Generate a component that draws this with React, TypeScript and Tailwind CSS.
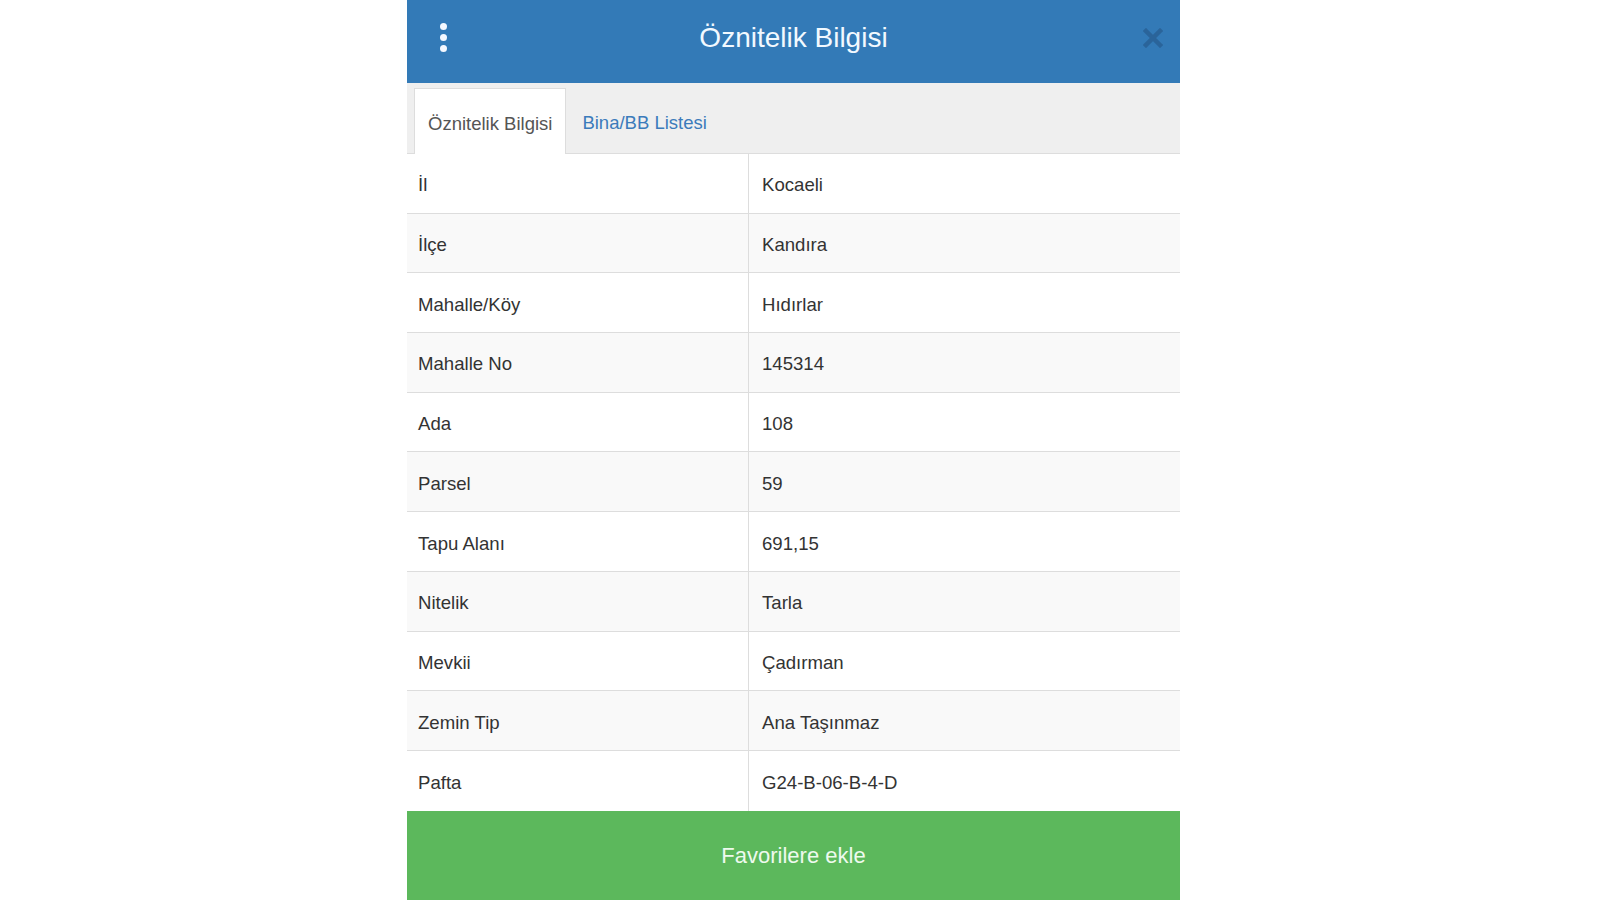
import React from 'react';

const rows: { label: string; value: string }[] = [
  { label: 'İl', value: 'Kocaeli' },
  { label: 'İlçe', value: 'Kandıra' },
  { label: 'Mahalle/Köy', value: 'Hıdırlar' },
  { label: 'Mahalle No', value: '145314' },
  { label: 'Ada', value: '108' },
  { label: 'Parsel', value: '59' },
  { label: 'Tapu Alanı', value: '691,15' },
  { label: 'Nitelik', value: 'Tarla' },
  { label: 'Mevkii', value: 'Çadırman' },
  { label: 'Zemin Tip', value: 'Ana Taşınmaz' },
  { label: 'Pafta', value: 'G24-B-06-B-4-D' },
];

function MenuDots() {
  return (
    <div className="flex flex-col gap-[4px]">
      <span className="block w-[7px] h-[7px] rounded-full bg-[#f4f8ff]" />
      <span className="block w-[7px] h-[7px] rounded-full bg-[#f4f8ff]" />
      <span className="block w-[7px] h-[7px] rounded-full bg-[#f4f8ff]" />
    </div>
  );
}

function CloseIcon() {
  return (
    <svg width="20" height="20" viewBox="0 0 20 20">
      <path d="M3 3 L17 17 M17 3 L3 17" stroke="#2a649a" strokeWidth="4.5" strokeLinecap="square" />
    </svg>
  );
}

export default function App() {
  return (
    <div className="min-h-[900px] bg-white" style={{ fontFamily: '"Liberation Sans", Arial, sans-serif' }}>
      <div className="ml-[407px] w-[773px] flex flex-col">
        {/* header */}
        <div className="h-[83px] bg-[#337ab7] grid grid-cols-[80px_1fr_80px] items-center">
          <div className="pl-[33px] pb-[8px]">
            <MenuDots />
          </div>
          <div className="text-center text-[28px] text-[#f2f9ff] pb-[8px]">Öznitelik Bilgisi</div>
          <div className="flex justify-end pr-[17px] pb-[8px]">
            <CloseIcon />
          </div>
        </div>

        {/* tabs */}
        <div className="h-[71px] bg-[#efefef] border-b border-[#dddddd] pt-[5px] pl-[7px] flex items-stretch">
          <div className="bg-white border border-[#dddddd] border-b-0 -mb-px px-[13px] pt-[4px] flex items-center text-[18.5px] text-[#555555]">
            Öznitelik Bilgisi
          </div>
          <div className="px-[16px] pt-[4px] flex items-center text-[18.5px] text-[#3b7bbb]">Bina/BB Listesi</div>
        </div>

        {/* attribute table */}
        <div className="flex flex-col">
          {rows.map((row, i) => (
            <div
              key={row.label}
              className={
                'grid grid-cols-[342px_1fr] h-[59.7px] text-[18.6px] text-[#333333] ' +
                (i < rows.length - 1 ? 'border-b border-[#dddddd] ' : '') +
                (i % 2 === 1 ? 'bg-[#f9f9f9]' : 'bg-white')
              }
            >
              <div className="flex items-center px-[11px] pt-[4px] border-r border-[#dddddd]">{row.label}</div>
              <div className="flex items-center pl-[13px] pt-[4px]">{row.value}</div>
            </div>
          ))}
        </div>

        {/* footer button */}
        <button className="h-[89px] bg-[#5cb85c] text-[22px] text-[#eefaee] flex items-center justify-center">
          Favorilere ekle
        </button>
      </div>
    </div>
  );
}
